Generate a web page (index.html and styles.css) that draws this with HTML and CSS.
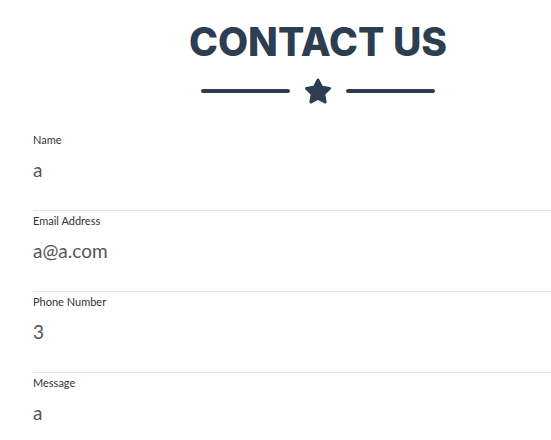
FILE: index.html
```html
<!DOCTYPE html>
<html lang="en">
<head>
<meta charset="utf-8">
<title>Contact Us</title>
<link rel="stylesheet" href="styles.css">
</head>
<body>
<div class="page">
  <h2 class="heading">CONTACT US</h2>
  <div class="divider">
    <span class="divider-line"></span>
    <svg class="divider-star" viewBox="0 0 576 512" aria-hidden="true"><path d="M259.3 17.8L194 150.2 47.9 171.5c-26.2 3.8-36.7 36.1-17.7 54.6l105.7 103-25 145.5c-4.5 26.3 23.2 46 46.4 33.7L288 439.6l130.7 68.7c23.2 12.2 50.9-7.4 46.4-33.7l-25-145.5 105.7-103c19-18.5 8.5-50.8-17.7-54.6L382 150.2 316.7 17.8c-11.7-23.6-45.6-23.9-57.4 0z"/></svg>
    <span class="divider-line"></span>
  </div>
  <form class="form">
    <div class="group">
      <label class="label">Name</label>
      <div class="value">a</div>
    </div>
    <div class="group">
      <label class="label">Email Address</label>
      <div class="value">a@a.com</div>
    </div>
    <div class="group">
      <label class="label">Phone Number</label>
      <div class="value">3</div>
    </div>
    <div class="group">
      <label class="label">Message</label>
      <div class="value">a</div>
    </div>
  </form>
</div>
</body>
</html>
```
FILE: styles.css
```css
html, body {
  margin: 0;
  padding: 0;
  background: #fff;
  overflow: hidden;
}
body {
  font-family: "Lato", "Liberation Sans", sans-serif;
}
.page {
  width: 636px;
  display: flex;
  flex-direction: column;
}
.heading {
  margin: 17px 0 0;
  font-family: "Inter", "DejaVu Sans", sans-serif;
  font-weight: 800;
  font-size: 39px;
  line-height: 49px;
  color: #2c3e50;
  text-align: center;
}
.divider {
  margin-top: 12px;
  height: 26px;
  display: flex;
  align-items: center;
  justify-content: center;
  gap: 14px;
}
.divider-line {
  width: 89px;
  height: 4px;
  border-radius: 2px;
  background: #2c3e50;
}
.divider-star {
  width: 28px;
  height: 26px;
  fill: #2c3e50;
}
.form {
  margin-top: 26px;
  padding-left: 33px;
  display: flex;
  flex-direction: column;
}
.group {
  padding: 2px 0 28px;
  border-bottom: 1px solid #e6e6e6;
  display: flex;
  flex-direction: column;
}
.label {
  font-size: 11px;
  line-height: 16px;
  color: #333;
  margin-bottom: 10px;
}
.value {
  font-size: 19px;
  line-height: 24px;
  color: #555;
}
```
